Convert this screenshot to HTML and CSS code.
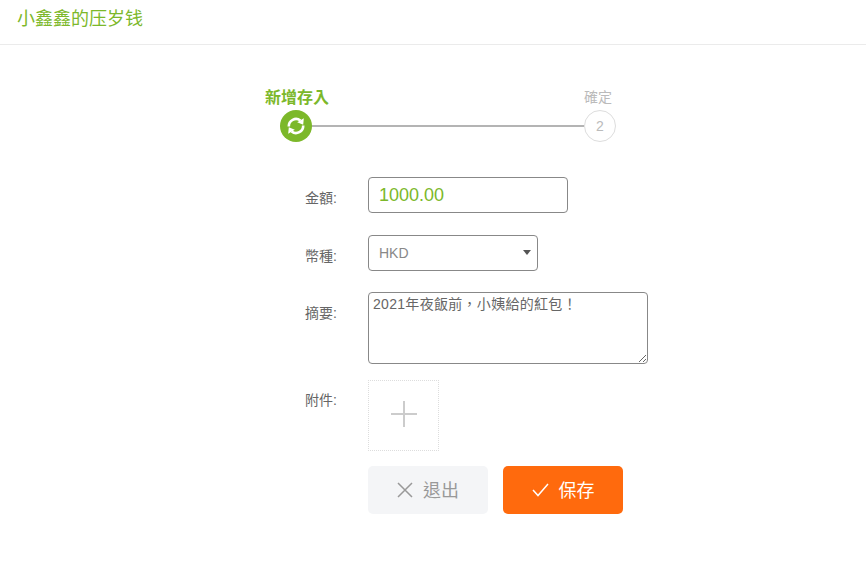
FILE: index.html
```html
<!DOCTYPE html>
<html lang="zh-Hant">

<head>
    <meta charset="UTF-8">
    <meta name="viewport" content="width=device-width, initial-scale=1.0">
    <title>小鑫鑫的压岁钱</title>
    <link rel="stylesheet" href="styles.css">
</head>

<body>
    <div class="header">小鑫鑫的压岁钱</div>

    <div class="content">
        <div class="steps">
            <div class="step-labels">
                <span class="step-now">新增存入</span>
                <span class="step-next">確定</span>
            </div>
            <div class="step-track">
                <span class="dot dot-now">
                    <svg width="22" height="22" viewBox="0 0 22 22" fill="none" stroke="#fff" stroke-width="2.6">
                        <path d="M3.8 11.5a7.2 7.2 0 0 1 11.6-6"/>
                        <path d="M18.2 10.5a7.2 7.2 0 0 1-11.6 6"/>
                        <path d="M18.8 3.2l-0.6 6.6-6-2.6z" fill="#fff" stroke="none"/>
                        <path d="M3.2 18.8l0.6-6.6 6 2.6z" fill="#fff" stroke="none"/>
                    </svg>
                </span>
                <span class="line"></span>
                <span class="dot dot-next">2</span>
            </div>
        </div>

        <div class="form">
            <div class="row row-money">
                <label class="label">金額:</label>
                <input class="money" type="text" value="1000.00">
            </div>
            <div class="row row-currency">
                <label class="label">幣種:</label>
                <div class="select">
                    <span>HKD</span>
                    <i class="caret"></i>
                </div>
            </div>
            <div class="row row-memo">
                <label class="label">摘要:</label>
                <textarea class="memo">2021年夜飯前，小姨給的紅包！</textarea>
            </div>
            <div class="row row-file">
                <label class="label">附件:</label>
                <div class="upload">
                    <svg width="28" height="28" viewBox="0 0 28 28" stroke="#ccc" stroke-width="2">
                        <path d="M14 1v26M1 14h26"/>
                    </svg>
                </div>
            </div>
            <div class="row row-btns">
                <span class="label"></span>
                <button class="btn btn-quit">
                    <svg width="16" height="16" viewBox="0 0 16 16" fill="none" stroke="#999" stroke-width="1.5">
                        <path d="M1 1l14 14M15 1L1 15"/>
                    </svg>
                    <span class="btn-text">退出</span>
                </button>
                <button class="btn btn-save">
                    <svg width="17" height="14" viewBox="0 0 17 14" fill="none" stroke="#fff" stroke-width="1.5">
                        <path d="M1 7l5 5.5L16 1"/>
                    </svg>
                    <span class="btn-text">保存</span>
                </button>
            </div>
        </div>
    </div>
</body>

</html>
```

FILE: styles.css
```css
* {
    margin: 0;
    padding: 0;
    box-sizing: border-box;
}

body {
    background: #fff;
    font-family: "Liberation Sans", "Noto Sans CJK TC", sans-serif;
    font-size: 14px;
    color: #666;
}

.header {
    height: 45px;
    padding-left: 17px;
    line-height: 38px;
    font-size: 18px;
    color: #7cb82a;
    border-bottom: 1px solid #ebebeb;
}

.content {
    padding-left: 265px;
}

/* steps */
.steps {
    width: 351px;
    padding-top: 40px;
}

.step-labels {
    display: flex;
    justify-content: space-between;
    align-items: flex-start;
    height: 25px;
    line-height: 24px;
}

.step-now {
    margin-top: 1px;
    font-size: 16px;
    font-weight: bold;
    color: #7cb82a;
}

.step-next {
    margin-right: 4px;
    font-size: 14px;
    color: #bbb;
}

.step-track {
    display: flex;
    align-items: center;
    padding-left: 15px;
}

.dot {
    display: flex;
    align-items: center;
    justify-content: center;
    flex: none;
    width: 32px;
    height: 32px;
    border-radius: 50%;
}

.dot-now {
    background: #7cb82a;
}

.dot-next {
    border: 1px solid #ddd;
    color: #bbb;
    font-size: 14px;
}

.line {
    flex: 1;
    height: 2px;
    background: #b4b4b4;
}

/* form */
.form {
    padding-top: 35px;
}

.row {
    display: flex;
    align-items: flex-start;
}

.label {
    flex: none;
    width: 72px;
    margin-right: 31px;
    text-align: right;
    font-size: 14px;
    color: #666;
    line-height: 20px;
}

.row-money {
    height: 58px;
}

.row-money .label,
.row-currency .label {
    padding-top: 11px;
}

.row-currency {
    height: 57px;
}

.row-memo {
    height: 88px;
}

.row-memo .label {
    padding-top: 11px;
}

.row-file {
    height: 86px;
}

.row-file .label {
    padding-top: 10px;
}

.money {
    width: 200px;
    height: 36px;
    padding: 0 10px;
    border: 1px solid #888;
    border-radius: 4px;
    font-family: inherit;
    font-size: 18px;
    color: #7cb82a;
    outline: none;
}

.select {
    display: flex;
    align-items: center;
    justify-content: space-between;
    width: 170px;
    height: 36px;
    padding: 0 6px 0 10px;
    border: 1px solid #888;
    border-radius: 4px;
    color: #888;
}

.caret {
    width: 0;
    height: 0;
    margin-top: -2px;
    border-left: 4px solid transparent;
    border-right: 4px solid transparent;
    border-top: 5px solid #555;
}

.memo {
    display: block;
    width: 280px;
    height: 72px;
    padding: 1px 4px;
    border: 1px solid #888;
    border-radius: 4px;
    font-family: inherit;
    font-size: 14px;
    letter-spacing: 0.3px;
    line-height: 20px;
    color: #666;
    outline: none;
}

.upload {
    display: flex;
    align-items: center;
    justify-content: center;
    width: 71px;
    height: 71px;
    padding-bottom: 3px;
    border: 1px dotted #ddd;
}

.btn {
    display: flex;
    align-items: center;
    justify-content: center;
    gap: 10px;
    width: 120px;
    height: 48px;
    border: none;
    border-radius: 5px;
    font-family: inherit;
    font-size: 18px;
}

.btn-text {
    margin-top: -2px;
}

.btn-quit {
    background: #f4f5f7;
    color: #999;
}

.btn-save {
    margin-left: 15px;
    background: #ff6a0d;
    color: #fff;
}
```
